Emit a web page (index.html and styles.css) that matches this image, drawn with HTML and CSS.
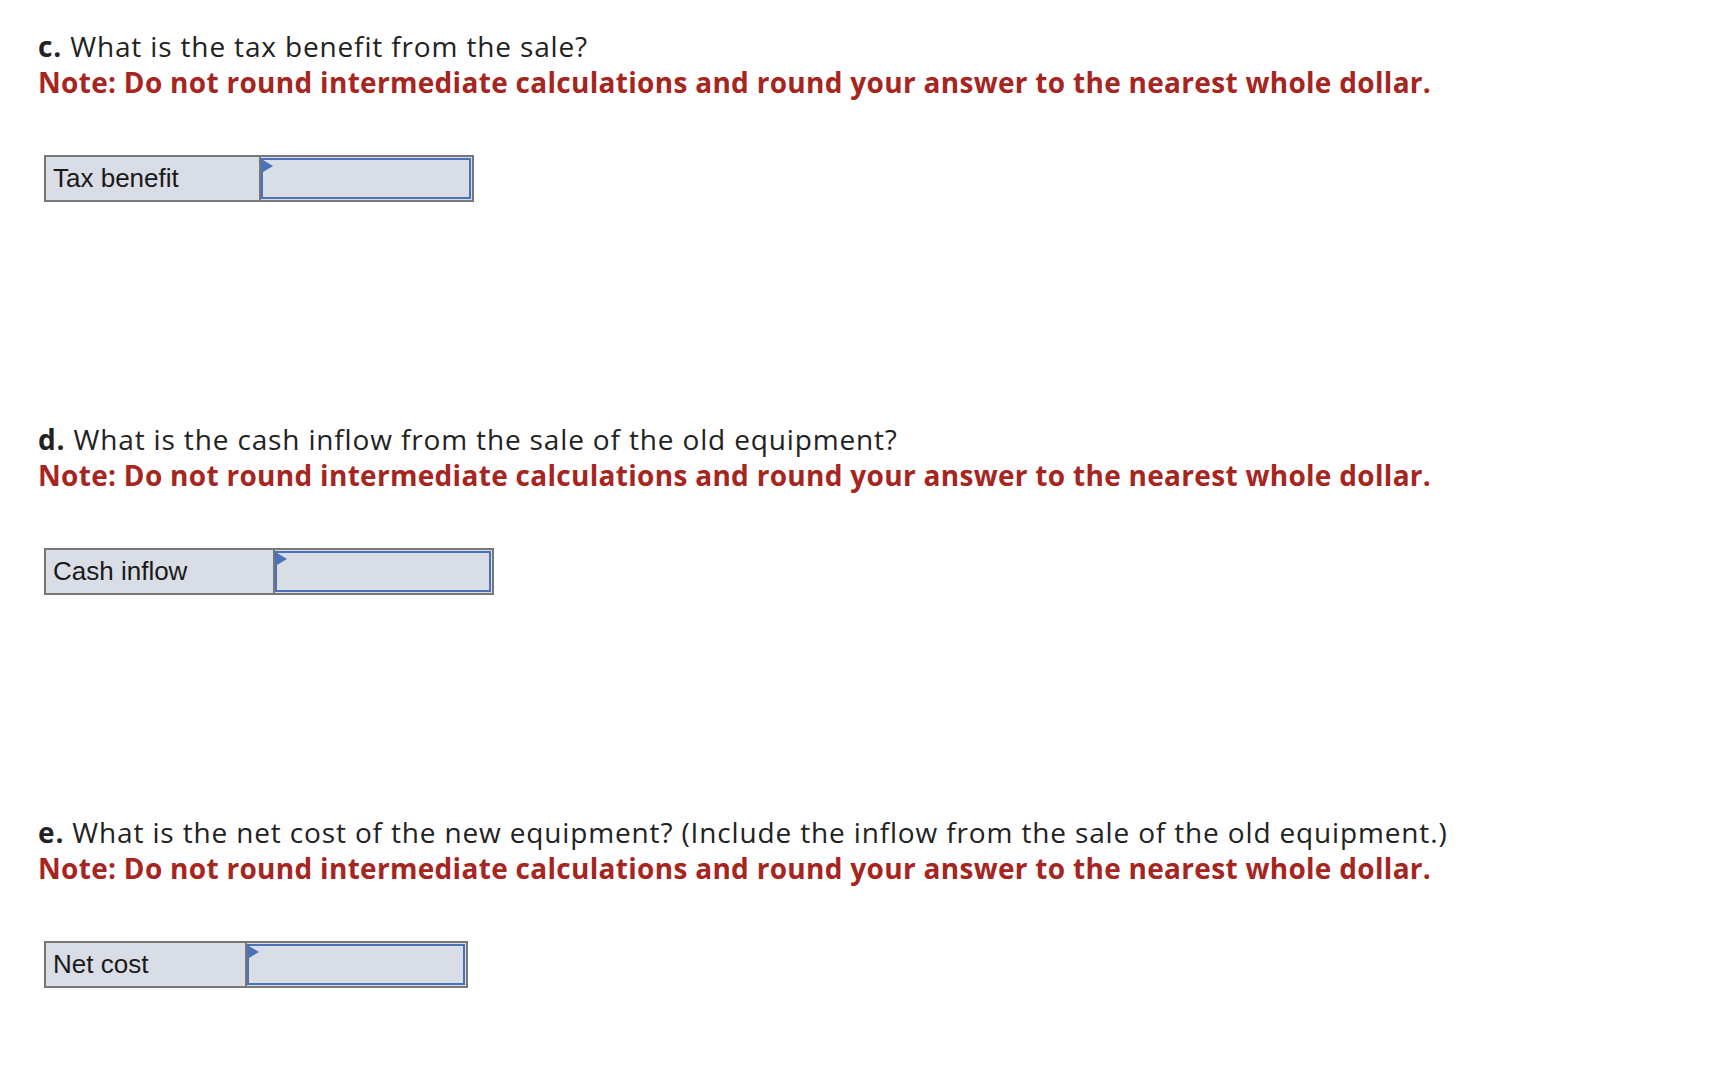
FILE: index.html
```html
<!DOCTYPE html>
<html>
<head>
<meta charset="utf-8">
<link rel="stylesheet" href="styles.css">
</head>
<body>
<div class="page">
  <section class="part">
    <p class="question"><b>c.</b> What is the tax benefit from the sale?</p>
    <p class="note">Note: Do not round intermediate calculations and round your answer to the nearest whole dollar.</p>
    <div class="answer">
      <div class="label label-c">Tax benefit</div>
      <div class="field field-c"><span class="flag"></span></div>
    </div>
  </section>
  <section class="part">
    <p class="question"><b>d.</b> What is the cash inflow from the sale of the old equipment?</p>
    <p class="note">Note: Do not round intermediate calculations and round your answer to the nearest whole dollar.</p>
    <div class="answer">
      <div class="label label-d">Cash inflow</div>
      <div class="field field-d"><span class="flag"></span></div>
    </div>
  </section>
  <section class="part">
    <p class="question"><b>e.</b> What is the net cost of the new equipment? (Include the inflow from the sale of the old equipment.)</p>
    <p class="note">Note: Do not round intermediate calculations and round your answer to the nearest whole dollar.</p>
    <div class="answer">
      <div class="label label-e">Net cost</div>
      <div class="field field-e"><span class="flag"></span></div>
    </div>
  </section>
</div>
</body>
</html>
```
FILE: styles.css
```css
html, body {
  margin: 0;
  padding: 0;
  background: #ffffff;
}
.page {
  padding: 28px 0 0 38px;
  font-family: "Open Sans", Lato, sans-serif;
  font-variant-ligatures: none;
}
.part {
  height: 393px;
}
.part:last-child {
  height: auto;
}
.question {
  margin: 0;
  font-size: 28px;
  line-height: 36px;
  letter-spacing: 0.85px;
  color: #222222;
}
.question b {
  font-weight: 700;
}
.note {
  margin: 0;
  font-size: 28px;
  line-height: 36px;
  letter-spacing: 0.3px;
  font-weight: 700;
  color: #a6251f;
}
.answer {
  display: flex;
  margin: 55px 0 0 6px;
  width: max-content;
  border: 2px solid #777777;
  height: 43px;
  background: #d9dde5;
}
.label {
  box-sizing: border-box;
  border-right: 2px solid #777777;
  padding-left: 7px;
  font-family: "Liberation Sans", Arial, sans-serif;
  font-size: 26px;
  line-height: 43px;
  color: #1a1a1a;
}
.label-c { width: 215px; }
.label-d { width: 229px; }
.label-e { width: 201px; }
.field {
  position: relative;
  box-sizing: border-box;
  margin: 1px 1px 1px 0;
  border: 2px solid #4a72b8;
  background: #d9dde5;
}
.field-c { width: 210px; }
.field-d { width: 216px; }
.field-e { width: 218px; }
.flag {
  position: absolute;
  left: 0;
  top: 0;
  width: 0;
  height: 0;
  border-top: 6px solid transparent;
  border-bottom: 6px solid transparent;
  border-left: 10px solid #4a72b8;
}
```
